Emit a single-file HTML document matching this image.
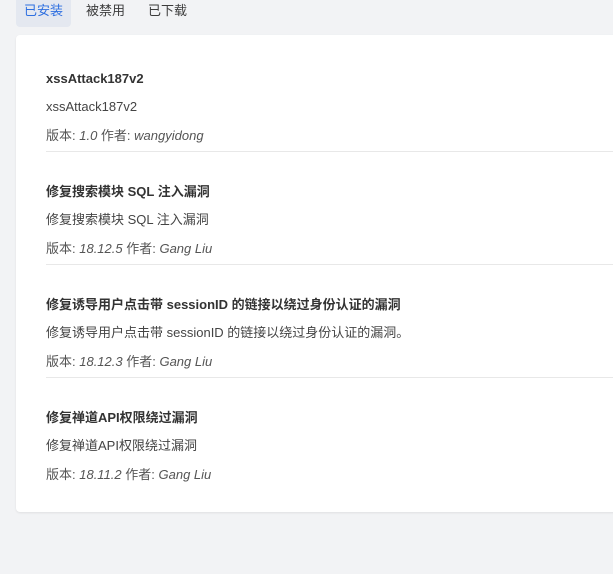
<!DOCTYPE html>
<html><head><meta charset="utf-8"><style>
*{margin:0;padding:0;box-sizing:border-box}
body{width:613px;height:574px;overflow:hidden;background:#f2f3f5;font-family:"Liberation Sans","Noto Sans CJK SC",sans-serif;font-size:13px;color:#333;position:relative}
.tabs{position:absolute;left:16px;top:0;height:27px;display:flex}
.tab{height:27px;line-height:21px;padding:0 8px;color:#3c3c3c;margin-right:7px}
.tab.a{background:#e4e8f0;color:#2e6fe0;border-radius:0 0 4px 4px}
.card{position:absolute;left:16px;top:35px;width:610px;height:477px;background:#fff;border-radius:4px;box-shadow:0 1px 2px rgba(0,0,0,.08)}
.item{position:absolute;left:30px;right:0;height:113px;border-bottom:1px solid #e8e8e8}
.t{position:absolute;top:31px;font-weight:bold;color:#333;line-height:18px}
.d{position:absolute;top:59px;color:#444;line-height:18px}
.m{position:absolute;top:88px;color:#555;line-height:18px}
.m i{font-style:italic}
</style></head><body>
<div class="tabs"><div class="tab a">已安装</div><div class="tab">被禁用</div><div class="tab">已下载</div></div>
<div class="card">
<div class="item" style="top:4px"><div class="t">xssAttack187v2</div><div class="d">xssAttack187v2</div><div class="m">版本: <i>1.0</i> 作者: <i>wangyidong</i></div></div>
<div class="item" style="top:117px"><div class="t">修复搜索模块 SQL 注入漏洞</div><div class="d">修复搜索模块 SQL 注入漏洞</div><div class="m">版本: <i>18.12.5</i> 作者: <i>Gang Liu</i></div></div>
<div class="item" style="top:230px"><div class="t">修复诱导用户点击带 sessionID 的链接以绕过身份认证的漏洞</div><div class="d">修复诱导用户点击带 sessionID 的链接以绕过身份认证的漏洞。</div><div class="m">版本: <i>18.12.3</i> 作者: <i>Gang Liu</i></div></div>
<div class="item" style="top:343px;border:none"><div class="t">修复禅道API权限绕过漏洞</div><div class="d">修复禅道API权限绕过漏洞</div><div class="m">版本: <i>18.11.2</i> 作者: <i>Gang Liu</i></div></div>
</div>
</body></html>
